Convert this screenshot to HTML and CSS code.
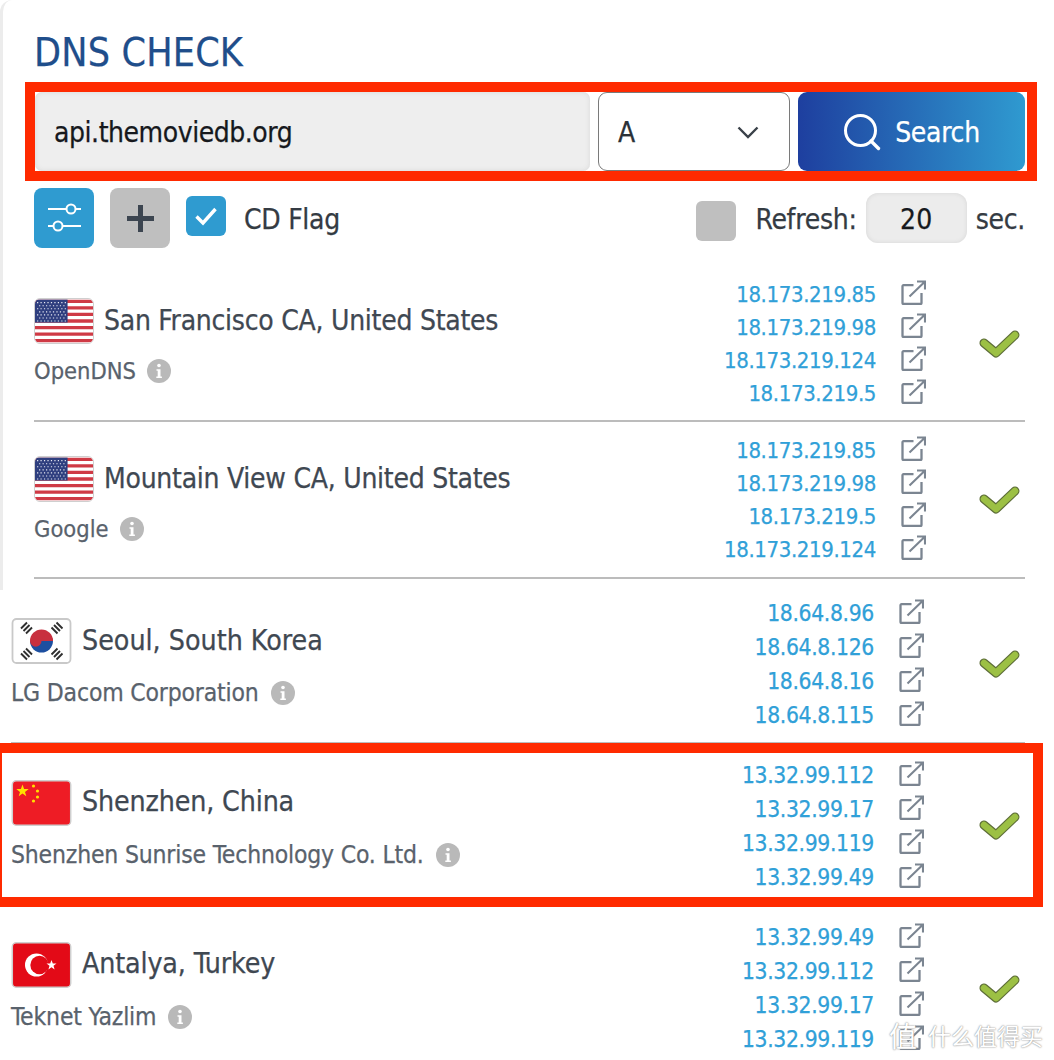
FILE: index.html
```html
<!DOCTYPE html>
<html lang="en">
<head>
<meta charset="utf-8">
<title>DNS Check</title>
<link rel="stylesheet" href="styles.css">
</head>
<body>
<svg class="defs" width="0" height="0" aria-hidden="true">
  <symbol id="ext" viewBox="0 0 25 25">
    <path d="M12.500 5.200H2.500a1 1 0 0 0-1 1V23a1 1 0 0 0 1 1h17a1 1 0 0 0 1-1V13" fill="none" stroke="#7b8591" stroke-width="2.300"/>
    <path d="M8.500 16.500 23 2.500M16 1.500h8v8" fill="none" stroke="#7b8591" stroke-width="2.100"/>
  </symbol>
  <symbol id="ok" viewBox="0 0 41 31">
    <polyline points="5,14 17,24 36,6" fill="none" stroke="#5d6d38" stroke-width="9" stroke-linejoin="round" stroke-linecap="round"/>
    <polyline points="5,14 17,24 36,6" fill="none" stroke="#9cc044" stroke-width="6.600" stroke-linejoin="round" stroke-linecap="round"/>
  </symbol>
  <symbol id="info" viewBox="0 0 24 24">
    <circle cx="12" cy="12" r="12" fill="#b9b9b9"/>
    <circle cx="12" cy="6.500" r="1.800" fill="#fff"/>
    <path d="M9.500 10.200h4v7.300h1.400v1.600H9.300v-1.600h1.400v-5.700H9.500z" fill="#fff"/>
  </symbol>
  <symbol id="us" viewBox="0 0 57 42">
    <rect width="57" height="42" fill="#fff"/>
    <path d="M0 1.600h57M0 8h57M0 14.500h57M0 21h57M0 27.500h57M0 34h57M0 40.400h57" stroke="#cf3a45" stroke-width="3.200"/>
    <rect width="32" height="22.500" fill="#2f3f7f"/>
    <path d="M2 3h29M4 6h27M2 9h29M4 12h27M2 15h29M4 18h27M2 21h29" stroke="#e6e8f2" stroke-width="1.100" stroke-dasharray="1.200 2.200" fill="none"/>
  </symbol>
</svg>

<main class="sheet">
  <section class="panel panel-top">
    <h1 class="title">DNS CHECK</h1>
    <form class="search">
      <input class="domain" type="text" value="api.themoviedb.org">
      <div class="select">
        <span>A</span>
        <svg class="chev" width="22" height="13" viewBox="0 0 22 13"><path d="M1.500 1.500 11 11 20.500 1.500" fill="none" stroke="#3a4149" stroke-width="2.400"/></svg>
      </div>
      <button class="go" type="button">
        <svg width="38" height="38" viewBox="0 0 38 38"><circle cx="17.500" cy="17.500" r="15" fill="none" stroke="#fff" stroke-width="3"/><path d="M28 28l7.500 7.500" stroke="#fff" stroke-width="3.400" stroke-linecap="round"/></svg>
        <span class="go-text">Search</span>
      </button>
    </form>
    <div class="tools">
      <div class="tools-left">
        <span class="tool tool-blue">
          <svg width="36" height="36" viewBox="0 0 36 36" fill="none" stroke="#fff" stroke-width="2"><path d="M2 9h18M30 9h5M2 26h5M17 26h18"/><circle cx="25" cy="9" r="4.500"/><circle cx="12" cy="26" r="4.500"/></svg>
        </span>
        <span class="tool tool-gray">
          <svg width="27" height="27" viewBox="0 0 27 27"><path d="M13.500 0v27M0 13.500h27" stroke="#3c4550" stroke-width="5"/></svg>
        </span>
        <span class="check check-on">
          <svg width="24" height="20" viewBox="0 0 24 20"><path d="M2.500 10.500 9 17 21.500 3" fill="none" stroke="#fff" stroke-width="3.400"/></svg>
        </span>
        <span class="label">CD Flag</span>
      </div>
      <div class="tools-right">
        <span class="check check-off"></span>
        <span class="label refresh">Refresh:</span>
        <input class="secs" type="text" value="20">
        <span class="label">sec.</span>
      </div>
    </div>

    <article class="row row-a">
      <div class="who">
        <div class="place"><svg class="flag flag-us"><use href="#us"/></svg><span>San Francisco CA, United States</span></div>
        <div class="isp">OpenDNS <svg class="info"><use href="#info"/></svg></div>
      </div>
      <ul class="ips">
        <li><a>18.173.219.85</a><svg class="ext"><use href="#ext"/></svg></li>
        <li><a>18.173.219.98</a><svg class="ext"><use href="#ext"/></svg></li>
        <li><a>18.173.219.124</a><svg class="ext"><use href="#ext"/></svg></li>
        <li><a>18.173.219.5</a><svg class="ext"><use href="#ext"/></svg></li>
      </ul>
      <svg class="ok"><use href="#ok"/></svg>
    </article>

    <article class="row row-b">
      <div class="who">
        <div class="place"><svg class="flag flag-us"><use href="#us"/></svg><span>Mountain View CA, United States</span></div>
        <div class="isp">Google <svg class="info"><use href="#info"/></svg></div>
      </div>
      <ul class="ips">
        <li><a>18.173.219.85</a><svg class="ext"><use href="#ext"/></svg></li>
        <li><a>18.173.219.98</a><svg class="ext"><use href="#ext"/></svg></li>
        <li><a>18.173.219.5</a><svg class="ext"><use href="#ext"/></svg></li>
        <li><a>18.173.219.124</a><svg class="ext"><use href="#ext"/></svg></li>
      </ul>
      <svg class="ok"><use href="#ok"/></svg>
    </article>
  </section>

  <section class="panel panel-low">
    <article class="row row-c row-first">
      <div class="who">
        <div class="place">
          <svg class="flag flag-kr" viewBox="0 0 60 46">
            <rect x="1" y="1" width="58" height="44" rx="4" fill="#fff" stroke="#c9c9c9" stroke-width="1.800"/>
            <path d="M18.500 23a11.500 11.500 0 0 1 23 0z" fill="#c8303f"/>
            <path d="M18.500 23a11.500 11.500 0 0 0 23 0z" fill="#1c4fa0"/>
            <path d="M18.500 23a5.750 5.750 0 0 0 11.500 0 5.750 5.750 0 0 1 11.500 0z" fill="#c8303f"/>
            <path d="M12 13l6-6M14.500 15.500l6-6M9.500 10.500l6-6M40 9.500l6 6M42.500 7l6 6M45 4.500l6 6M12 33l6 6M9.500 35.500l6 6M14.500 30.500l6 6M40 36.500l6-6M42.500 39l6-6M45 41.500l6-6" stroke="#2f2f2f" stroke-width="1.900"/>
          </svg>
          <span class="name">Seoul, South Korea</span>
        </div>
        <div class="isp">LG Dacom Corporation <svg class="info"><use href="#info"/></svg></div>
      </div>
      <ul class="ips">
        <li><a>18.64.8.96</a><svg class="ext"><use href="#ext"/></svg></li>
        <li><a>18.64.8.126</a><svg class="ext"><use href="#ext"/></svg></li>
        <li><a>18.64.8.16</a><svg class="ext"><use href="#ext"/></svg></li>
        <li><a>18.64.8.115</a><svg class="ext"><use href="#ext"/></svg></li>
      </ul>
      <svg class="ok"><use href="#ok"/></svg>
    </article>

    <article class="row row-c">
      <div class="who">
        <div class="place">
          <svg class="flag flag-cn" viewBox="0 0 60 46">
            <rect x=".8" y=".8" width="58.400" height="44.400" rx="4" fill="#ee1c25" stroke="#cfcfcf" stroke-width="1.500"/>
            <polygon points="11,4.500 12.600,9 17.200,9 13.500,11.900 14.800,16.300 11,13.600 7.200,16.300 8.500,11.900 4.800,9 9.400,9" fill="#ffe000"/>
            <circle cx="22" cy="6" r="1.600" fill="#ffe000"/><circle cx="26" cy="11" r="1.600" fill="#ffe000"/><circle cx="26" cy="17" r="1.600" fill="#ffe000"/><circle cx="22" cy="21" r="1.600" fill="#ffe000"/>
          </svg>
          <span class="name name-up">Shenzhen, China</span>
        </div>
        <div class="isp">Shenzhen Sunrise Technology Co. Ltd. <svg class="info"><use href="#info"/></svg></div>
      </div>
      <ul class="ips">
        <li><a>13.32.99.112</a><svg class="ext"><use href="#ext"/></svg></li>
        <li><a>13.32.99.17</a><svg class="ext"><use href="#ext"/></svg></li>
        <li><a>13.32.99.119</a><svg class="ext"><use href="#ext"/></svg></li>
        <li><a>13.32.99.49</a><svg class="ext"><use href="#ext"/></svg></li>
      </ul>
      <svg class="ok"><use href="#ok"/></svg>
    </article>

    <article class="row row-c row-last">
      <div class="who">
        <div class="place">
          <svg class="flag flag-tr" viewBox="0 0 60 46">
            <rect x=".8" y=".8" width="58.400" height="44.400" rx="4" fill="#e30a17" stroke="#cfcfcf" stroke-width="1.500"/>
            <circle cx="25" cy="23" r="11.500" fill="#fff"/><circle cx="28" cy="23" r="9.200" fill="#e30a17"/>
            <polygon points="40,18 41.300,21.500 45,21.500 42,23.800 43.100,27.500 40,25.300 36.900,27.500 38,23.800 35,21.500 38.700,21.500" fill="#fff"/>
          </svg>
          <span class="name name-up">Antalya, Turkey</span>
        </div>
        <div class="isp">Teknet Yazlim <svg class="info"><use href="#info"/></svg></div>
      </div>
      <ul class="ips">
        <li><a>13.32.99.49</a><svg class="ext"><use href="#ext"/></svg></li>
        <li><a>13.32.99.112</a><svg class="ext"><use href="#ext"/></svg></li>
        <li><a>13.32.99.17</a><svg class="ext"><use href="#ext"/></svg></li>
        <li><a>13.32.99.119</a><svg class="ext"><use href="#ext"/></svg></li>
      </ul>
      <svg class="ok"><use href="#ok"/></svg>
    </article>
  </section>

  <div class="mark mark-search"></div>
  <div class="mark mark-result"></div>
  <div class="watermark"><span class="seal">值</span><span>什么值得买</span></div>
</main>
</body>
</html>
```
FILE: styles.css
```css
* { box-sizing: border-box; }
html, body { margin: 0; padding: 0; background: #fff; }
body { width: 1054px; height: 1060px; overflow: hidden; }
.defs { position: absolute; }
.sheet {
  position: relative;
  width: 1054px;
  height: 1060px;
  overflow: hidden;
  font-family: "DejaVu Sans", sans-serif;
  font-stretch: condensed;
  color: #3f4852;
  -webkit-text-stroke: .25px currentColor;
}
.panel-top {
  height: 590px;
  padding: 0 29px 0 31px;
  border-left: 3px solid #ececec;
  border-top-left-radius: 12px;
}
.title {
  margin: 0;
  padding-top: 29px;
  height: 92px;
  font-size: 39px;
  line-height: 48px;
  font-weight: 400;
  letter-spacing: .2px;
  color: #1f4e8b;
}
.search { display: flex; height: 79px; margin-left: 1px; }
.domain {
  width: 555px;
  height: 79px;
  margin: 0;
  padding: 2px 19px 0;
  border: 0;
  border-radius: 7px;
  background: #eee;
  box-shadow: inset 0 0 5px #d8d8d8;
  font: inherit;
  font-stretch: condensed;
  font-size: 28px;
  letter-spacing: -.45px;
  color: #16191d;
}
.select {
  display: flex;
  align-items: center;
  justify-content: space-between;
  width: 192px;
  height: 79px;
  margin-left: 8px;
  padding: 2px 30px 0 19px;
  border: 1.500px solid #7a7a7a;
  border-radius: 9px;
  font-size: 28px;
  color: #2b3138;
}
.go {
  display: flex;
  align-items: center;
  justify-content: center;
  gap: 14px;
  width: 227px;
  height: 79px;
  margin: 0 0 0 8px;
  padding: 0;
  border: 0;
  border-radius: 9px;
  background: linear-gradient(90deg, #1e3f9f, #2f9ad0);
  color: #fff;
  font: inherit;
  font-stretch: condensed;
  font-size: 28px;
  letter-spacing: -.3px;
}
.go-text { padding-top: 2px; }
.tools {
  display: flex;
  justify-content: space-between;
  align-items: center;
  height: 60px;
  margin-top: 17px;
}
.tools-left, .tools-right { display: flex; align-items: center; }
.tool {
  display: flex;
  align-items: center;
  justify-content: center;
  width: 60px;
  height: 60px;
  border-radius: 8px;
}
.tool-blue { background: #2f9bd0; }
.tool-gray { background: #bfbfbf; margin-left: 16px; }
.check {
  display: flex;
  align-items: center;
  justify-content: center;
  width: 40px;
  height: 40px;
  border-radius: 6px;
}
.check-on { background: #2f9bd0; margin: -4px 18px 0 16px; }
.check-off { background: #bfbfbf; margin: 6px 19px 0 0; }
.label { padding-top: 3px; font-size: 28px; letter-spacing: -.28px; color: #343b43; }
.refresh { margin-right: 9px; }
.secs {
  width: 101px;
  height: 50px;
  margin: 0 9px 0 0;
  padding: 2px 0 0;
  border: 0;
  border-radius: 12px;
  background: #ececec;
  box-shadow: inset 0 0 4px #d6d6d6;
  text-align: center;
  font: inherit;
  font-stretch: condensed;
  font-size: 28px;
  color: #16191d;
}
.row {
  display: flex;
  justify-content: space-between;
  border-bottom: 2px solid #bcbcbc;
}
.who { flex: 1; }
.place {
  display: flex;
  align-items: center;
  font-size: 28px;
  letter-spacing: -.26px;
  line-height: 46px;
}
.flag { display: block; width: 60px; height: 46px; margin-right: 10px; flex: none; border-radius: 4px; }
.flag-us { border: 1.500px solid #cfcfcf; border-radius: 6px; }
.isp {
  display: flex;
  align-items: center;
  gap: 11px;
  margin-top: 4px;
  font-size: 23.500px;
  line-height: 46px;
  color: #59626c;
}
.info { width: 24px; height: 24px; display: block; }
.ips { list-style: none; margin: 0 -1px 0 0; padding: 0; }
.ips li {
  display: flex;
  justify-content: flex-end;
  align-items: center;
  gap: 25px;
  font-size: 22px;
  letter-spacing: -.38px;
  color: #30a0d8;
}
.ext { width: 25px; height: 25px; display: block; margin-top: -4px; }
.ok { width: 41px; height: 31px; margin-left: 54px; margin-right: 5px; align-self: center; flex: none; }

.row-a, .row-b { padding-bottom: 10px; }
.row-a { margin-top: 30px; height: 144px; padding-top: 0; }
.row-b { height: 157px; padding-top: 12px; }
.row-a .ips li, .row-b .ips li { height: 33px; }
.row-a .who { padding-top: 20px; }
.row-b .who { padding-top: 22px; }

.panel-low { padding: 0 29px 0 11px; }
.panel-low .place { font-size: 28.300px; letter-spacing: 0; }
.panel-low .flag { width: 61px; }
.panel-low .isp { margin-top: 6px; font-size: 24.500px; letter-spacing: -.18px; gap: 12px; }
.name-up { margin-top: -3px; letter-spacing: -.15px; }
.row-c { height: 162px; padding: 14px 0 10px; }
.row-c .ips { margin-right: 1px; }
.row-c .ips li { height: 34px; font-size: 22.700px; letter-spacing: -.35px; }
.row-c .who { padding-top: 22px; }
.row-first { height: 154px; padding-top: 6px; }
.row-last { border-bottom: 0; }

.mark { position: absolute; border: 10px solid #ff2a00; }
.mark-search { left: 25px; top: 82px; width: 1012px; height: 99px; }
.mark-result { left: -8px; top: 743px; width: 1051px; height: 164px; }

.watermark {
  position: absolute;
  left: 889px;
  top: 1018px;
  display: flex;
  align-items: center;
  gap: 11px;
  height: 34px;
  font-family: "Noto Sans CJK SC", sans-serif;
  font-size: 23px;
  line-height: 34px;
  color: #fff;
  -webkit-text-stroke: 0;
  text-shadow: 0 0 2px #8f8f8f, 0 0 1px #a5a5a5;
}
.seal { font-size: 28px; }
```
